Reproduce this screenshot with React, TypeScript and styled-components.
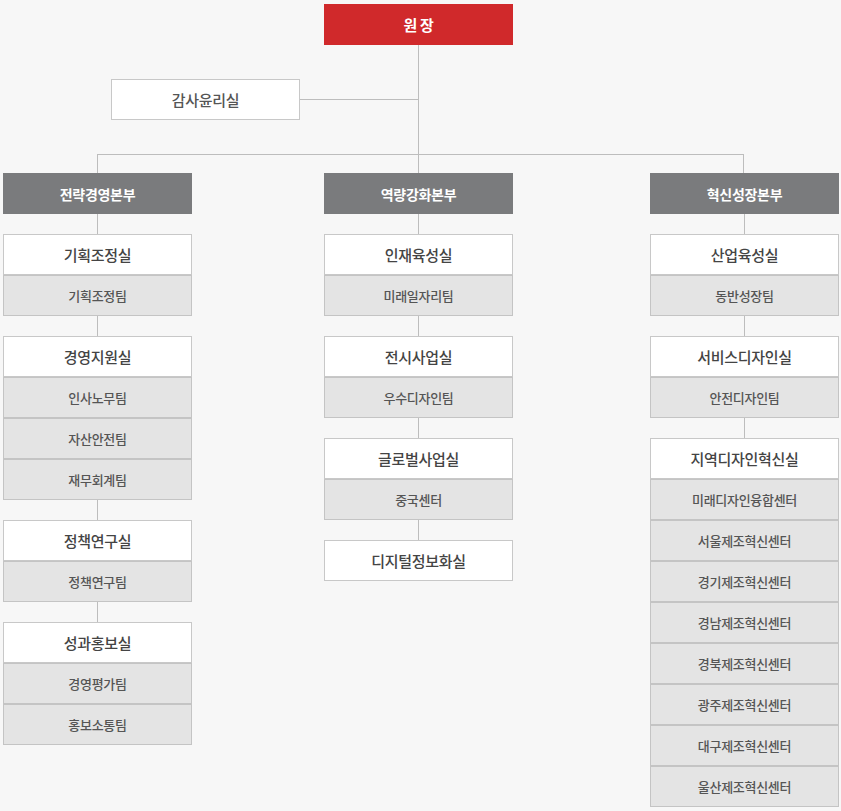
import React from "react";
import styled, { createGlobalStyle } from "styled-components";

const Global = createGlobalStyle`
  html, body { margin: 0; padding: 0; background: #f7f7f7; }
  body { font-family: "Noto Sans CJK KR", "Noto Sans", sans-serif; }
`;

const LINE = "#bdbdbd";

const Page = styled.div`
  width: 841px;
  height: 811px;
  padding: 4px 0 0 3px;
  box-sizing: border-box;
  overflow: hidden;
`;

const TopRow = styled.div`
  display: flex;
  padding-left: 321px;
`;

const Box = styled.div<{ $bg: string; $color: string; $size: number; $bold?: boolean; $border?: string }>`
  width: 189px;
  height: 41px;
  box-sizing: border-box;
  display: flex;
  align-items: center;
  justify-content: center;
  background: ${(p) => p.$bg};
  color: ${(p) => p.$color};
  font-size: ${(p) => p.$size}px;
  font-weight: ${(p) => (p.$bold ? 700 : 500)};
  border: 1px solid ${(p) => p.$border ?? p.$bg};
  letter-spacing: -0.3px;
`;

const Spine = styled.div<{ $h: number }>`
  width: 416px;
  height: ${(p) => p.$h}px;
  box-sizing: border-box;
  border-right: 1px solid ${LINE};
`;

const AuditRow = styled.div`
  display: flex;
  width: 416px;
  height: 40px;
`;

const Spacer = styled.div<{ $w: number }>`
  width: ${(p) => p.$w}px;
  flex: none;
`;

const Branch = styled.div`
  flex: 1;
  border-right: 1px solid ${LINE};
  background: linear-gradient(${LINE}, ${LINE}) no-repeat left 20px / 100% 1px;
`;

const Bus = styled.div`
  margin-left: 94px;
  width: 647px;
  height: 19px;
  box-sizing: border-box;
  border-top: 1px solid ${LINE};
  border-left: 1px solid ${LINE};
  border-right: 1px solid ${LINE};
  background: linear-gradient(${LINE}, ${LINE}) no-repeat 320px 0 / 1px 100%;
`;

const Columns = styled.div`
  display: grid;
  grid-template-columns: 189px 189px 189px;
  column-gap: 132px;
  width: 835px;
  & > :nth-child(3) { margin-left: 5px; }
`;

const Column = styled.div`
  display: flex;
  flex-direction: column;
`;

const Connector = styled.div`
  height: 20px;
  width: 189px;
  background: linear-gradient(${LINE}, ${LINE}) no-repeat 94px 0 / 1px 100%;
`;

const Group = styled.div`
  display: flex;
  flex-direction: column;
`;

type G = { office: string; teams: string[] };
const cols: { head: string; groups: G[] }[] = [
  {
    head: "전략경영본부",
    groups: [
      { office: "기획조정실", teams: ["기획조정팀"] },
      { office: "경영지원실", teams: ["인사노무팀", "자산안전팀", "재무회계팀"] },
      { office: "정책연구실", teams: ["정책연구팀"] },
      { office: "성과홍보실", teams: ["경영평가팀", "홍보소통팀"] },
    ],
  },
  {
    head: "역량강화본부",
    groups: [
      { office: "인재육성실", teams: ["미래일자리팀"] },
      { office: "전시사업실", teams: ["우수디자인팀"] },
      { office: "글로벌사업실", teams: ["중국센터"] },
      { office: "디지털정보화실", teams: [] },
    ],
  },
  {
    head: "혁신성장본부",
    groups: [
      { office: "산업육성실", teams: ["동반성장팀"] },
      { office: "서비스디자인실", teams: ["안전디자인팀"] },
      {
        office: "지역디자인혁신실",
        teams: [
          "미래디자인융합센터",
          "서울제조혁신센터",
          "경기제조혁신센터",
          "경남제조혁신센터",
          "경북제조혁신센터",
          "광주제조혁신센터",
          "대구제조혁신센터",
          "울산제조혁신센터",
        ],
      },
    ],
  },
];

export default function App() {
  return (
    <Page>
      <Global />
      <TopRow>
        <Box $bg="#d0292b" $color="#fff" $size={15} $bold>원 장</Box>
      </TopRow>
      <Spine $h={34} />
      <AuditRow>
        <Spacer $w={108} />
        <Box $bg="#fff" $color="#555" $size={15} $border="#c8c8c8">감사윤리실</Box>
        <Branch />
      </AuditRow>
      <Spine $h={35} />
      <Bus />
      <Columns>
        {cols.map((c) => (
          <Column key={c.head}>
            <Box $bg="#7a7b7d" $color="#fff" $size={14} $bold>{c.head}</Box>
            {c.groups.map((g) => (
              <React.Fragment key={g.office}>
                <Connector />
                <Group>
                  <Box $bg="#fff" $color="#444" $size={15} $border="#c8c8c8">{g.office}</Box>
                  {g.teams.map((t) => (
                    <Box key={t} $bg="#e4e4e4" $color="#555" $size={13} $border="#c4c4c4">{t}</Box>
                  ))}
                </Group>
              </React.Fragment>
            ))}
          </Column>
        ))}
      </Columns>
    </Page>
  );
}
